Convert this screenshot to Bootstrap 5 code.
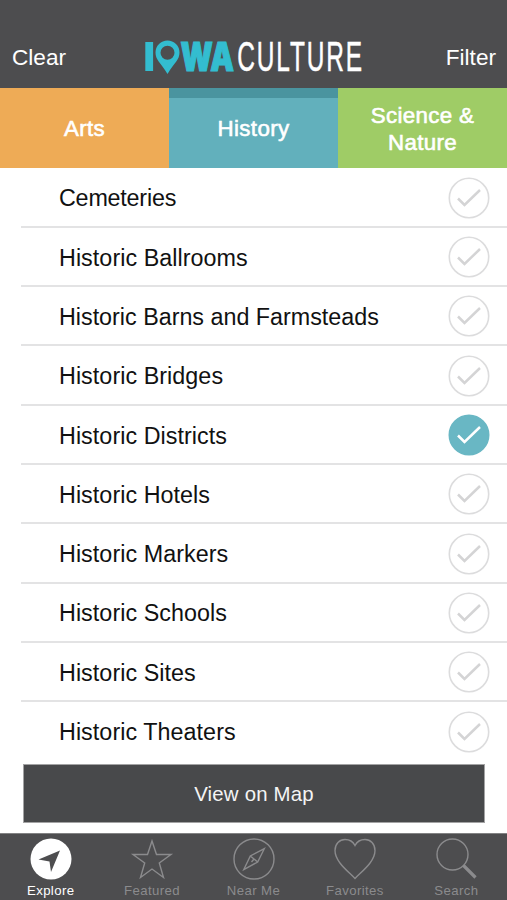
<!DOCTYPE html>
<html lang="en">
<head>
<meta charset="utf-8">
<meta name="viewport" content="width=device-width, initial-scale=1">
<title>Iowa Culture</title>
<link href="https://cdn.jsdelivr.net/npm/bootstrap@5.3.0/dist/css/bootstrap.min.css" rel="stylesheet">
<style>
body{font-family:"Liberation Sans",Arial,sans-serif;background:#fff;color:#111;height:900px;overflow:hidden}
svg{display:block}
.topbar{height:87.5px;background:#4d4d4f;color:#fff;font-size:22.6px;line-height:28px;padding:0 11px 16px 12px}
.logo{margin-bottom:-14px;margin-left:-1px}
.cat{height:80.5px;font-size:22.3px;letter-spacing:.35px;line-height:27px;color:#fff;-webkit-text-stroke:.6px #fff;padding-top:2px}
.cat-arts{background:#eeab56}
.cat-history{background:#62b0bc;box-shadow:inset 0 10px #4a949f}
.cat-science{background:#9fcc66}
.topics{margin-left:21px;padding-top:.5px}
.topic{height:59.33px;padding:0 17px 0 38px;font-size:23.3px;border-bottom:2px solid #e3e3e4}
.topic:last-child{border-color:transparent}
.topic span{padding-top:3px;letter-spacing:.06px}
.topic:first-child span{letter-spacing:-.2px}
.topic:nth-child(3) span{letter-spacing:0}
.tick{width:42px;height:42px;fill:none;stroke:#dcdcdd;stroke-width:1.6;margin-top:1px}
.tick path{stroke:#d4d4d5;stroke-width:2.5}
.tick.on circle{fill:#69b7c4;stroke:#69b7c4}
.tick.on path{stroke:#fff}
.map-btn{margin:2.5px 22px 0 23px;height:59px;background:#48494b;border:1.5px solid #a3a3a4;color:#f4f4f4;font-size:20.4px;letter-spacing:.2px;padding-top:2px}
.tabs{height:67px;background:#4d4d4f;border-top:1.5px solid #828283;color:#8b8b8d;font-size:13.2px;letter-spacing:.4px;line-height:16px}
.tabs svg{width:44px;height:44px;margin:4px 0 1px;fill:none;stroke:#8b8b8d;stroke-width:1.4}
.tabs .current{color:#fff}
</style>
</head>
<body class="d-flex flex-column">
<header class="topbar d-flex justify-content-between align-items-end flex-shrink-0">
  <span>Clear</span>
  <svg class="logo" width="224" height="56" viewBox="143 30 224 56" role="img" aria-label="Iowa Culture">
    <g fill="#33bdd0">
      <rect x="145.300" y="42" width="7.800" height="29"/>
      <path fill-rule="evenodd" d="M167.500 40.500a12 12 0 0 0-12 12c0 7.500 5 10 12 21.500 7-11.500 12-14 12-21.500a12 12 0 0 0-12-12zm0 5.300a7 7 0 1 1 0 14 7 7 0 0 1 0-14z"/>
      <text x="180.500" y="70.800" font-family="Inter, Liberation Sans, sans-serif" font-weight="900" font-size="39.500" textLength="53.500" lengthAdjust="spacingAndGlyphs" stroke="#33bdd0" stroke-width="1.200">WA</text>
    </g>
    <text transform="translate(237.200 71) scale(.583 1)" fill="#fff" stroke="#fff" stroke-width=".5" font-size="42" letter-spacing="3.200">CULTURE</text>
  </svg>
  <span>Filter</span>
</header>
<nav class="row g-0 text-center flex-shrink-0">
  <div class="col cat cat-arts d-flex align-items-center justify-content-center">Arts</div>
  <div class="col cat cat-history d-flex align-items-center justify-content-center">History</div>
  <div class="col cat cat-science d-flex align-items-center justify-content-center">Science &amp;<br>Nature</div>
</nav>
<main class="topics flex-shrink-0">
  <div class="topic d-flex align-items-center justify-content-between"><span>Cemeteries</span><svg class="tick" viewBox="0 0 42 42"><circle cx="21" cy="21" r="19.700"/><path d="M10 21.500l6.500 6.500L32 13"/></svg></div>
  <div class="topic d-flex align-items-center justify-content-between"><span>Historic Ballrooms</span><svg class="tick" viewBox="0 0 42 42"><circle cx="21" cy="21" r="19.700"/><path d="M10 21.500l6.500 6.500L32 13"/></svg></div>
  <div class="topic d-flex align-items-center justify-content-between"><span>Historic Barns and Farmsteads</span><svg class="tick" viewBox="0 0 42 42"><circle cx="21" cy="21" r="19.700"/><path d="M10 21.500l6.500 6.500L32 13"/></svg></div>
  <div class="topic d-flex align-items-center justify-content-between"><span>Historic Bridges</span><svg class="tick" viewBox="0 0 42 42"><circle cx="21" cy="21" r="19.700"/><path d="M10 21.500l6.500 6.500L32 13"/></svg></div>
  <div class="topic d-flex align-items-center justify-content-between"><span>Historic Districts</span><svg class="tick on" viewBox="0 0 42 42"><circle cx="21" cy="21" r="19.700"/><path d="M10 21.500l6.500 6.500L32 13"/></svg></div>
  <div class="topic d-flex align-items-center justify-content-between"><span>Historic Hotels</span><svg class="tick" viewBox="0 0 42 42"><circle cx="21" cy="21" r="19.700"/><path d="M10 21.500l6.500 6.500L32 13"/></svg></div>
  <div class="topic d-flex align-items-center justify-content-between"><span>Historic Markers</span><svg class="tick" viewBox="0 0 42 42"><circle cx="21" cy="21" r="19.700"/><path d="M10 21.500l6.500 6.500L32 13"/></svg></div>
  <div class="topic d-flex align-items-center justify-content-between"><span>Historic Schools</span><svg class="tick" viewBox="0 0 42 42"><circle cx="21" cy="21" r="19.700"/><path d="M10 21.500l6.500 6.500L32 13"/></svg></div>
  <div class="topic d-flex align-items-center justify-content-between"><span>Historic Sites</span><svg class="tick" viewBox="0 0 42 42"><circle cx="21" cy="21" r="19.700"/><path d="M10 21.500l6.500 6.500L32 13"/></svg></div>
  <div class="topic d-flex align-items-center justify-content-between"><span>Historic Theaters</span><svg class="tick" viewBox="0 0 42 42"><circle cx="21" cy="21" r="19.700"/><path d="M10 21.500l6.500 6.500L32 13"/></svg></div>
</main>
<button type="button" class="map-btn d-flex align-items-center justify-content-center flex-shrink-0">View on Map</button>
<footer class="tabs row g-0 mt-auto flex-shrink-0">
  <div class="col d-flex flex-column align-items-center current">
    <svg viewBox="0 0 44 44"><circle cx="22" cy="21" r="20.500" fill="#fff" stroke="none"/><path d="M31 12.500L9.500 21.500l11 2 1.500 10.500z" fill="#4d4d4f" stroke="none"/></svg>
    <span>Explore</span>
  </div>
  <div class="col d-flex flex-column align-items-center">
    <svg viewBox="0 0 44 44"><path d="M22 3l4.500 13.500H41L29.300 25 33.500 39.500 22 31 10.500 39.500 14.700 25 3 16.500h14.500z"/></svg>
    <span>Featured</span>
  </div>
  <div class="col d-flex flex-column align-items-center">
    <svg viewBox="0 0 44 44"><circle cx="22" cy="21" r="20"/><path d="M32.300 10.700L18.300 18l-6.500 13.500L25.700 24zM18.300 18l7.400 6M22 21l-2.500 3"/></svg>
    <span>Near Me</span>
  </div>
  <div class="col d-flex flex-column align-items-center">
    <svg viewBox="0 0 44 44"><path d="M22 40.500C16 34 2 24 2 12.500 2 6 6.500 1.500 12 1.500c4.500 0 8 2 10 6 2-4 5.500-6 10-6 5.500 0 10 4.500 10 11C42 24 28 34 22 40.500z"/></svg>
    <span>Favorites</span>
  </div>
  <div class="col d-flex flex-column align-items-center">
    <svg viewBox="0 0 44 44"><circle cx="18.500" cy="16.500" r="15.500"/><path d="M29.500 27.500L41.500 39.500" stroke-width="3.200"/></svg>
    <span>Search</span>
  </div>
</footer>
<script src="https://cdn.jsdelivr.net/npm/bootstrap@5.3.0/dist/js/bootstrap.bundle.min.js"></script>
</body>
</html>
